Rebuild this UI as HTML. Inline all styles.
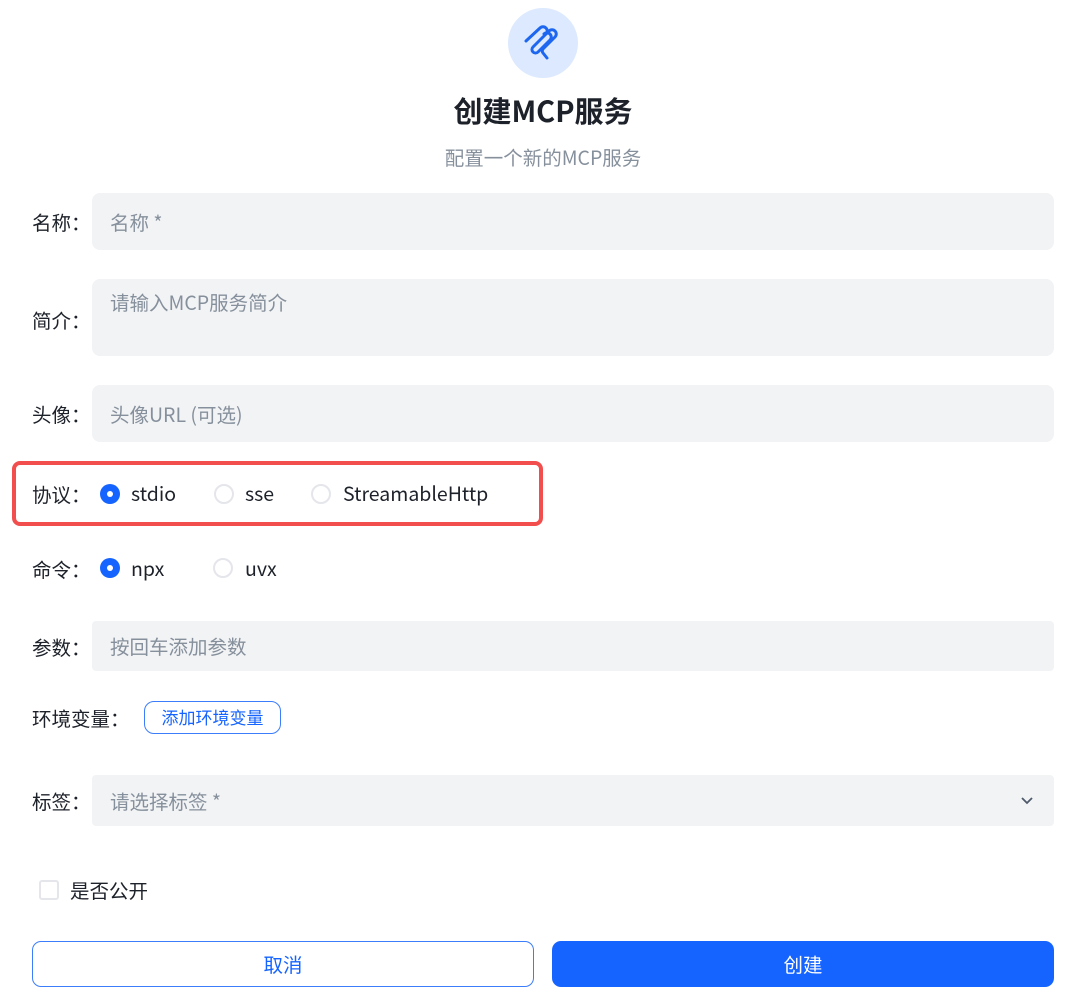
<!DOCTYPE html>
<html><head><meta charset="utf-8"><style>
*{box-sizing:border-box;margin:0;padding:0}
body{width:1080px;height:1004px;background:#fff;font-family:"Noto Sans CJK SC","Liberation Sans",sans-serif;color:#1d2129;position:relative;overflow:hidden}
.a{position:absolute}
.lbl{position:absolute;left:32px;font-size:19.5px;color:#1d2129;line-height:24px}
.inp{position:absolute;left:92px;width:962px;background:#f2f3f5;border-radius:8px;font-size:19.5px;color:#86909c;padding-left:18px}
.radio{position:absolute;width:20px;height:20px;border-radius:50%;border:2px solid #e5e6eb;background:#fff}
.radio.on{border:none;background:#1664ff}
.radio.on::after{content:"";position:absolute;left:7px;top:7px;width:6px;height:6px;border-radius:50%;background:#fff}
.rt{position:absolute;font-size:19.5px;line-height:24px;color:#1d2129}
</style></head><body>
<div class="a" style="left:508px;top:8px;width:70px;height:70px;border-radius:50%;background:#dce9fe"></div>
<svg class="a" style="left:0;top:0" width="1080" height="90" fill="none" stroke="#1d66f0" stroke-width="3" stroke-linecap="round" stroke-linejoin="round">
<path d="M526 41 L540 28 a4 4 0 0 1 6 6 L533 47 a3.5 3.5 0 0 0 5 5 L550 40 a4 4 0 0 0 -6 -6"/>
<path d="M546 34 L549 31 a4 4 0 0 1 6 6 L543 49 a3 3 0 0 0 0 4 L547 58"/>
</svg>
<div class="a" style="left:0;width:1086px;top:90px;text-align:center;font-size:29px;font-weight:bold;line-height:40px;color:#1d2129">创建MCP服务</div>
<div class="a" style="left:0;width:1086px;top:144px;text-align:center;font-size:19.5px;line-height:26px;color:#86909c">配置一个新的MCP服务</div>

<div class="lbl" style="top:210px">名称：</div>
<div class="inp" style="top:193px;height:57px;line-height:57px">名称 *</div>
<div class="lbl" style="top:308px">简介：</div>
<div class="inp" style="top:279px;height:77px;padding-top:11px;line-height:24px">请输入MCP服务简介</div>
<div class="lbl" style="top:402px">头像：</div>
<div class="inp" style="top:385px;height:57px;line-height:57px">头像URL (可选)</div>

<div class="a" style="left:12px;top:461px;width:531px;height:65px;border:4px solid #f24e4e;border-radius:8px"></div>
<div class="lbl" style="top:482px">协议：</div>
<div class="radio on" style="left:100px;top:484px"></div><div class="rt" style="left:131px;top:481px">stdio</div>
<div class="radio" style="left:214px;top:484px"></div><div class="rt" style="left:245px;top:481px">sse</div>
<div class="radio" style="left:311px;top:484px"></div><div class="rt" style="left:343px;top:481px">StreamableHttp</div>

<div class="lbl" style="top:557px">命令：</div>
<div class="radio on" style="left:100px;top:558px"></div><div class="rt" style="left:131px;top:556px">npx</div>
<div class="radio" style="left:213px;top:558px"></div><div class="rt" style="left:245px;top:556px">uvx</div>

<div class="lbl" style="top:635px">参数：</div>
<div class="inp" style="top:621px;height:50px;line-height:50px;border-radius:4px">按回车添加参数</div>

<div class="lbl" style="top:706px">环境变量：</div>
<div class="a" style="left:144px;top:701px;width:137px;height:33px;border:1.5px solid #3c7dfc;border-radius:10px;color:#1664ff;font-size:17px;line-height:30px;text-align:center">添加环境变量</div>

<div class="lbl" style="top:789px">标签：</div>
<div class="inp" style="top:775px;height:51px;line-height:51px;border-radius:4px">请选择标签 *</div>
<svg class="a" style="left:1020px;top:796px" width="14" height="10" viewBox="0 0 14 10"><path d="M2 2 L7 7 L12 2" fill="none" stroke="#4e5969" stroke-width="1.8"/></svg>

<div class="a" style="left:39px;top:880px;width:20px;height:20px;border:2px solid #e5e6eb;border-radius:3px"></div>
<div class="rt" style="left:70px;top:878px">是否公开</div>

<div class="a" style="left:32px;top:941px;width:502px;height:46px;border:1.5px solid #3c7dfc;border-radius:9px;color:#1664ff;font-size:19.5px;line-height:43px;text-align:center">取消</div>
<div class="a" style="left:552px;top:941px;width:502px;height:46px;background:#1664ff;border-radius:9px;color:#fff;font-size:19.5px;line-height:46px;text-align:center">创建</div>
</body></html>
